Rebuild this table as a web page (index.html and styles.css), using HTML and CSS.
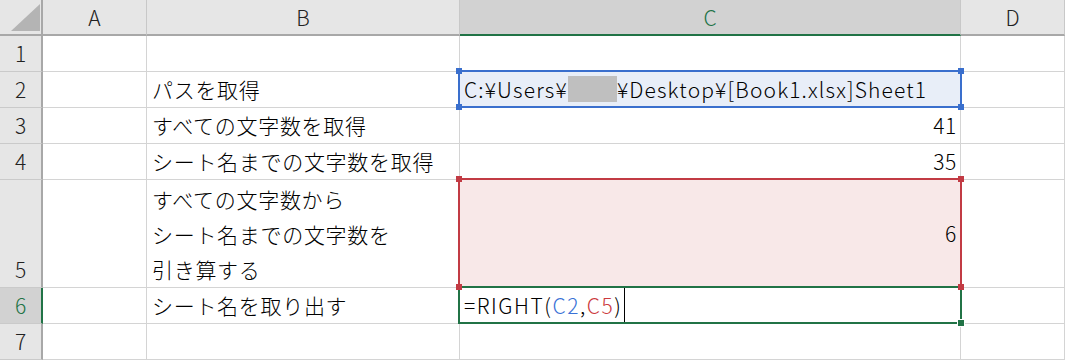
FILE: index.html
```html
<!DOCTYPE html>
<html lang="ja">
<head>
  <meta charset="UTF-8">
  <meta name="viewport" content="width=device-width, initial-scale=1.0">
  <title>Book1 - Sheet1</title>
  <link rel="stylesheet" href="styles.css">
</head>
<body>

  <div class="sheet">
    <!-- 見出し行 -->
    <div class="corner">
      <svg width="41" height="34" viewBox="0 0 41 34"><polygon points="11,31 40,31 40,4" fill="#b4b4b4"/></svg>
    </div>
    <div class="hd">A</div>
    <div class="hd">B</div>
    <div class="hd active">C</div>
    <div class="hd">D</div>

    <!-- 1 -->
    <div class="rh">1</div>
    <div class="c"></div>
    <div class="c"></div>
    <div class="c"></div>
    <div class="c"></div>

    <!-- 2 -->
    <div class="rh">2</div>
    <div class="c"></div>
    <div class="c">パスを取得</div>
    <div class="c ref-blue latin">C:¥Users¥<span class="masked"></span>¥Desktop¥[Book1.xlsx]Sheet1
      <div class="sel blue"><span class="h tl"></span><span class="h tr"></span><span class="h bl"></span><span class="h br"></span></div>
    </div>
    <div class="c"></div>

    <!-- 3 -->
    <div class="rh">3</div>
    <div class="c"></div>
    <div class="c">すべての文字数を取得</div>
    <div class="c num">41</div>
    <div class="c"></div>

    <!-- 4 -->
    <div class="rh">4</div>
    <div class="c"></div>
    <div class="c">シート名までの文字数を取得</div>
    <div class="c num">35</div>
    <div class="c"></div>

    <!-- 5 -->
    <div class="rh">5</div>
    <div class="c"></div>
    <div class="c lines">
      <div>すべての文字数から</div>
      <div>シート名までの文字数を</div>
      <div>引き算する</div>
    </div>
    <div class="c num mid ref-red">6
      <div class="sel red"><span class="h tl"></span><span class="h tr"></span><span class="h bl"></span><span class="h br"></span></div>
    </div>
    <div class="c"></div>

    <!-- 6 -->
    <div class="rh active">6</div>
    <div class="c"></div>
    <div class="c">シート名を取り出す</div>
    <div class="c editing">=RIGHT(<span class="t-blue">C2</span>,<span class="t-red">C5</span>)<span class="caret"></span>
      <div class="sel green"><span class="h br"></span></div>
    </div>
    <div class="c"></div>

    <!-- 7 -->
    <div class="rh">7</div>
    <div class="c"></div>
    <div class="c"></div>
    <div class="c"></div>
    <div class="c"></div>
  </div>

</body>
</html>
```

FILE: styles.css
```css
body {
  margin: 0;
  font-family: "Noto Sans CJK JP", sans-serif;
  font-size: 21px;
  font-weight: 300;
  color: #000;
  background-color: #fff;
  overflow: hidden;
}
.sheet {
  display: grid;
  grid-template-columns: 43px 104px 313px 501px 104px;
  grid-template-rows: 36px 36px 36px 36px 36px 108px 36px 36px;
}
.sheet > div {
  box-sizing: border-box;
}

/* 見出し */
.corner, .hd, .rh {
  background-color: #e6e6e6;
  color: #222;
}
.corner {
  border-right: 2px solid #a8a8a8;
  border-bottom: 2px solid #a8a8a8;
}
.corner svg {
  display: block;
}
.hd {
  display: flex;
  align-items: center;
  justify-content: center;
  border-right: 1px solid #c8c8c8;
  border-bottom: 2px solid #a8a8a8;
}
.rh {
  display: flex;
  align-items: flex-end;
  justify-content: center;
  line-height: 35px;
  border-right: 2px solid #a8a8a8;
  border-bottom: 1px solid #cacaca;
}
.hd.active, .rh.active {
  background-color: #d2d2d2;
  color: #217346;
}
.hd.active {
  border-bottom-color: #217346;
}
.rh.active {
  border-right-color: #217346;
}

/* セル */
.c {
  display: flex;
  align-items: flex-end;
  line-height: 35px;
  letter-spacing: 0.7px;
  padding: 0 3px 0 5px;
  white-space: nowrap;
  border-right: 1px solid #d4d4d4;
  border-bottom: 1px solid #d4d4d4;
}
.c.num {
  justify-content: flex-end;
}
.c.mid {
  align-items: center;
}
.c.lines {
  flex-direction: column;
  justify-content: flex-end;
  align-items: flex-start;
}
.c.latin {
  letter-spacing: 1.15px;
}
.ref-blue {
  background-color: #e8eef8;
}
.ref-red {
  background-color: #f8e8e8;
}
.ref-blue, .ref-red, .editing {
  position: relative;
  padding-left: 4px;
}
.editing {
  letter-spacing: 1.55px;
}
.masked {
  display: inline-block;
  width: 49px;
  height: 26px;
  margin-bottom: 5px;
  background-color: #bfbfbf;
}
.t-blue { color: #3a72d6; }
.t-red { color: #cc3a3e; }
.caret {
  display: inline-block;
  width: 1px;
  height: 35px;
  margin-left: 1px;
  background-color: #000;
}

/* 選択枠 */
.sel {
  position: absolute;
  top: -2px;
  left: -2px;
  right: -2px;
  bottom: -1px;
  border: 2px solid;
}
.sel.blue { border-color: #3a6fcd; }
.sel.red { border-color: #c23b44; }
.sel.green { border-color: #217346; }
.sel .h {
  position: absolute;
  width: 6px;
  height: 6px;
  z-index: 2;
}
.sel.blue .h { background-color: #3a6fcd; }
.sel.red .h { background-color: #c23b44; }
.sel.green .h {
  background-color: #217346;
  outline: 1px solid #fff;
}
.h.tl { top: -4px; left: -4px; }
.h.tr { top: -4px; right: -4px; }
.h.bl { bottom: -4px; left: -4px; }
.h.br { bottom: -4px; right: -4px; }
```
